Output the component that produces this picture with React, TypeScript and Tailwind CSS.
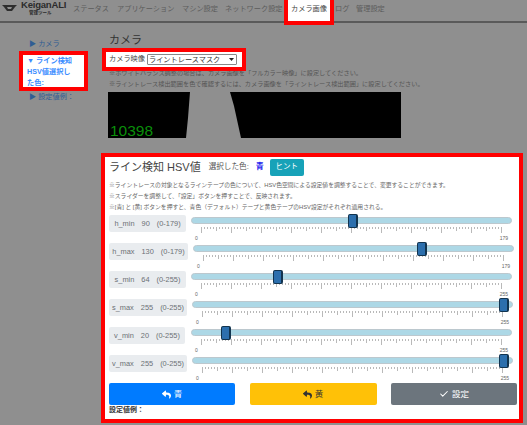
import React from 'react';
import { Check } from 'lucide-react';
import { FaReply } from 'react-icons/fa';

const NAV = [
  { name: 'ステータス', w: 'w-[44px]' },
  { name: 'アプリケーション', w: 'w-[65px]' },
  { name: 'マシン設定', w: 'w-[43px]' },
  { name: 'ネットワーク設定', w: 'w-[66px]' },
];

const SLIDERS = [
  { name: 'h_min', value: 90, max: 179, labelW: 'w-[77px]', ml: 'ml-[5px]' },
  { name: 'h_max', value: 130, max: 179, labelW: 'w-[79px]', ml: 'ml-[5px]' },
  { name: 's_min', value: 64, max: 255, labelW: 'w-[77px]', ml: 'ml-[5px]' },
  { name: 's_max', value: 255, max: 255, labelW: 'w-[78px]', ml: 'ml-[5px]' },
  { name: 'v_min', value: 20, max: 255, labelW: 'w-[76px]', ml: 'ml-[6px]' },
  { name: 'v_max', value: 255, max: 255, labelW: 'w-[78px]', ml: 'ml-[5px]' },
];

const Ticks = () => {
  const lines = [];
  for (let i = 0; i <= 100; i++) {
    const h = i % 10 === 0 ? 6 : i % 5 === 0 ? 4 : 2;
    lines.push(<line key={i} x1={i * 3 + 0.5} x2={i * 3 + 0.5} y1={0} y2={h} stroke="#8a8a8a" strokeWidth={0.6} />);
  }
  return (
    <svg width="301" height="6" className="block ml-[10px]">
      {lines}
    </svg>
  );
};

const SliderRow = ({ name, value, max, labelW, ml }: (typeof SLIDERS)[number]) => {
  const left = 10.6 + (value / max) * 300;
  return (
    <div className="flex items-start h-[28px]">
      <div className={`${labelW} h-[17px] shrink-0 flex items-center justify-center gap-[7px] rounded-[2px] bg-[#e9ecef] text-[7.4px] text-[#6b7075]`}>
        <span>{name}</span>
        <span>{value}</span>
        <span>(0-{max})</span>
      </div>
      <div className={`${ml} w-[321px] shrink-0`}>
        <div className="relative h-[7px] mt-[2px] mb-[3px] rounded-full bg-[#add8e6] border border-[#bcc8ce]">
          <div
            className="absolute top-[-4px] w-[10px] h-[14px] -ml-[5px] rounded-[2px] bg-[#2c6fad] border border-[#12344f] border-r-2"
            style={{ left }}
          />
        </div>
        <Ticks />
        <div className="flex justify-between px-[2px] mt-[2px] text-[5px] leading-[7px] text-[#666]">
          <span className="ml-[2px]">0</span>
          <span className="mr-[2px]">{max}</span>
        </div>
      </div>
    </div>
  );
};

export default function App() {
  return (
    <div className="w-[527px] h-[425px] overflow-hidden bg-[#8f8f8f] text-[#333] font-['Liberation_Sans','Noto_Sans_CJK_JP',sans-serif]">
      <header className="flex h-[23px] items-start border-b-2 border-[#5a5a5a]">
        <svg width="15" height="8" viewBox="0 0 15 8" className="ml-[2px] mt-[4px] shrink-0">
          <path d="M0 1 L15 1 L13 3 L10 7 L5 7 L2 3 Z" fill="#2e2e2e" />
          <path d="M5 3 L10 3 L9 5 L6 5 Z" fill="#8f8f8f" />
        </svg>
        <div className="ml-[4px] w-[46px] shrink-0 text-[#2b2b2b]">
          <div className="text-[9.5px] leading-[10px] mt-[0px] font-bold tracking-[-0.2px]">KeiganALI</div>
          <div className="text-[4.5px] leading-[6px] ml-[8px] font-bold">管理ツール</div>
        </div>
        <nav className="flex items-start text-[7.2px] text-[#5c5c5c] ml-[6px]">
          {NAV.map((n) => (
            <span key={n.name} className={`${n.w} shrink-0 leading-[13px] mt-[2px] whitespace-nowrap`}>
              {n.name}
            </span>
          ))}
          <span className="-ml-[7px] shrink-0 h-[25px] w-[50px] border-4 border-t-0 border-[#f00] bg-white text-[#444] leading-[13px] pt-[2px] text-center whitespace-nowrap">
            カメラ画像
          </span>
          <span className="ml-[1px] w-[21px] mt-[2px] leading-[13px] shrink-0">ログ</span>
          <span className="w-[40px] mt-[2px] leading-[13px] whitespace-nowrap">管理設定</span>
        </nav>
      </header>

      <div className="flex">
        <aside className="w-[100px] shrink-0 pl-[19px] pt-[15px]">
          <div className="ml-[10px] text-[7.2px] leading-[12px] text-[#2f5d93]">▶ カメラ</div>
          <div className="w-[69px] h-[40px] mt-[1px] border-4 border-[#f00] bg-white pl-[4px] text-[7.2px] leading-[11px] font-bold text-[#3b8dff]">
            ▼ ライン検知
            <br />
            HSV値選択し
            <br />
            た色:
          </div>
          <div className="ml-[10px] text-[7.2px] leading-[12px] text-[#2f5d93]">▶ 設定値例：</div>
        </aside>

        <main className="w-[425px] shrink-0">
          <h1 className="ml-[9px] mt-[10px] text-[11px] leading-[15px] text-[#333]">カメラ</h1>
          <div className="relative z-10 ml-[2px] w-[144px] h-[23px] border-4 border-[#f00] bg-white flex items-center pl-[3px] gap-[2px]">
            <span className="text-[7.2px] whitespace-nowrap text-[#444]">カメラ映像</span>
            <div className="relative w-[90px] h-[11px]">
              <select className="appearance-none block w-full h-full border border-[#888] rounded-[1px] bg-white pl-[1px] text-[7.2px] leading-[9px] text-[#333] outline-none">
                <option>ライントレースマスク</option>
              </select>
              <svg width="5" height="3" viewBox="0 0 5 3" className="absolute right-[3px] top-[4px]">
                <path d="M0 0 L5 0 L2.5 3 Z" fill="#222" />
              </svg>
            </div>
          </div>
          <div className="ml-[9px] -mt-[4px] text-[6.2px] leading-[11px] text-[#555] whitespace-nowrap">
            <p>※ホワイトバランス調整の場合は、カメラ画像を「フルカラー映像」に設定してください。</p>
            <p>※ライントレース検出範囲を色で確認するには、カメラ画像を「ライントレース検出範囲」に設定してください。</p>
          </div>
          <div className="relative ml-[8px] mt-[3px] w-[293px] h-[46px]">
            <svg width="293" height="46" className="block">
              <rect width="293" height="46" fill="#000" />
              <path d="M82 0 L122 0 L126 14 L133 46 L78 46 L80 26 Z" fill="#8f8f8f" />
            </svg>
            <span className="absolute left-[2px] bottom-[0px] text-[15.5px] leading-[15px] text-[#0a8f0a]">10398</span>
          </div>

          <section className="ml-[1px] mt-[15px] w-[422px] h-[270px] border-4 border-[#f00] bg-white px-[4px]">
            <div className="flex items-center h-[20px]">
              <h2 className="text-[11px] text-[#444] whitespace-nowrap">ライン検知 HSV値</h2>
              <span className="ml-[8px] text-[7.6px] text-[#555] whitespace-nowrap">選択した色:</span>
              <span className="ml-[7px] text-[8px] font-bold text-[#2222ee]">青</span>
              <button className="ml-[6px] w-[34px] h-[17px] rounded-[2px] bg-[#17a2b8] text-white text-[7.5px]">ヒント</button>
            </div>
            <div className="mt-[3px] mb-[2px] text-[5.8px] leading-[11px] text-[#666] whitespace-nowrap">
              <p>※ライントレースの対象となるラインテープの色について、HSV色空間による設定値を調整することで、変更することができます。</p>
              <p>※スライダーを調整して、「設定」ボタンを押すことで、反映されます。</p>
              <p>※[青] と [黄] ボタンを押すと、青色（デフォルト）テープと黄色テープのHSV設定がそれぞれ適用される。</p>
            </div>
            {SLIDERS.map((s) => (
              <SliderRow key={s.name} {...s} />
            ))}
            <div className="flex justify-between w-[408px]">
              <button className="w-[126px] h-[22px] rounded-[2px] bg-[#007bff] text-white text-[8.5px] flex items-center justify-center gap-[3px]">
                <FaReply size={9} />青
              </button>
              <button className="w-[127px] h-[22px] rounded-[2px] bg-[#ffc107] text-[#333] text-[8.5px] flex items-center justify-center gap-[3px]">
                <FaReply size={9} />黄
              </button>
              <button className="w-[126px] h-[22px] rounded-[2px] bg-[#6c757d] text-white text-[8.5px] flex items-center justify-center gap-[3px]">
                <Check size={10} strokeWidth={2.5} />設定
              </button>
            </div>
            <div className="mt-[0px] text-[7px] leading-[10px] font-bold text-[#333]">設定値例：</div>
          </section>
        </main>
      </div>
    </div>
  );
}
